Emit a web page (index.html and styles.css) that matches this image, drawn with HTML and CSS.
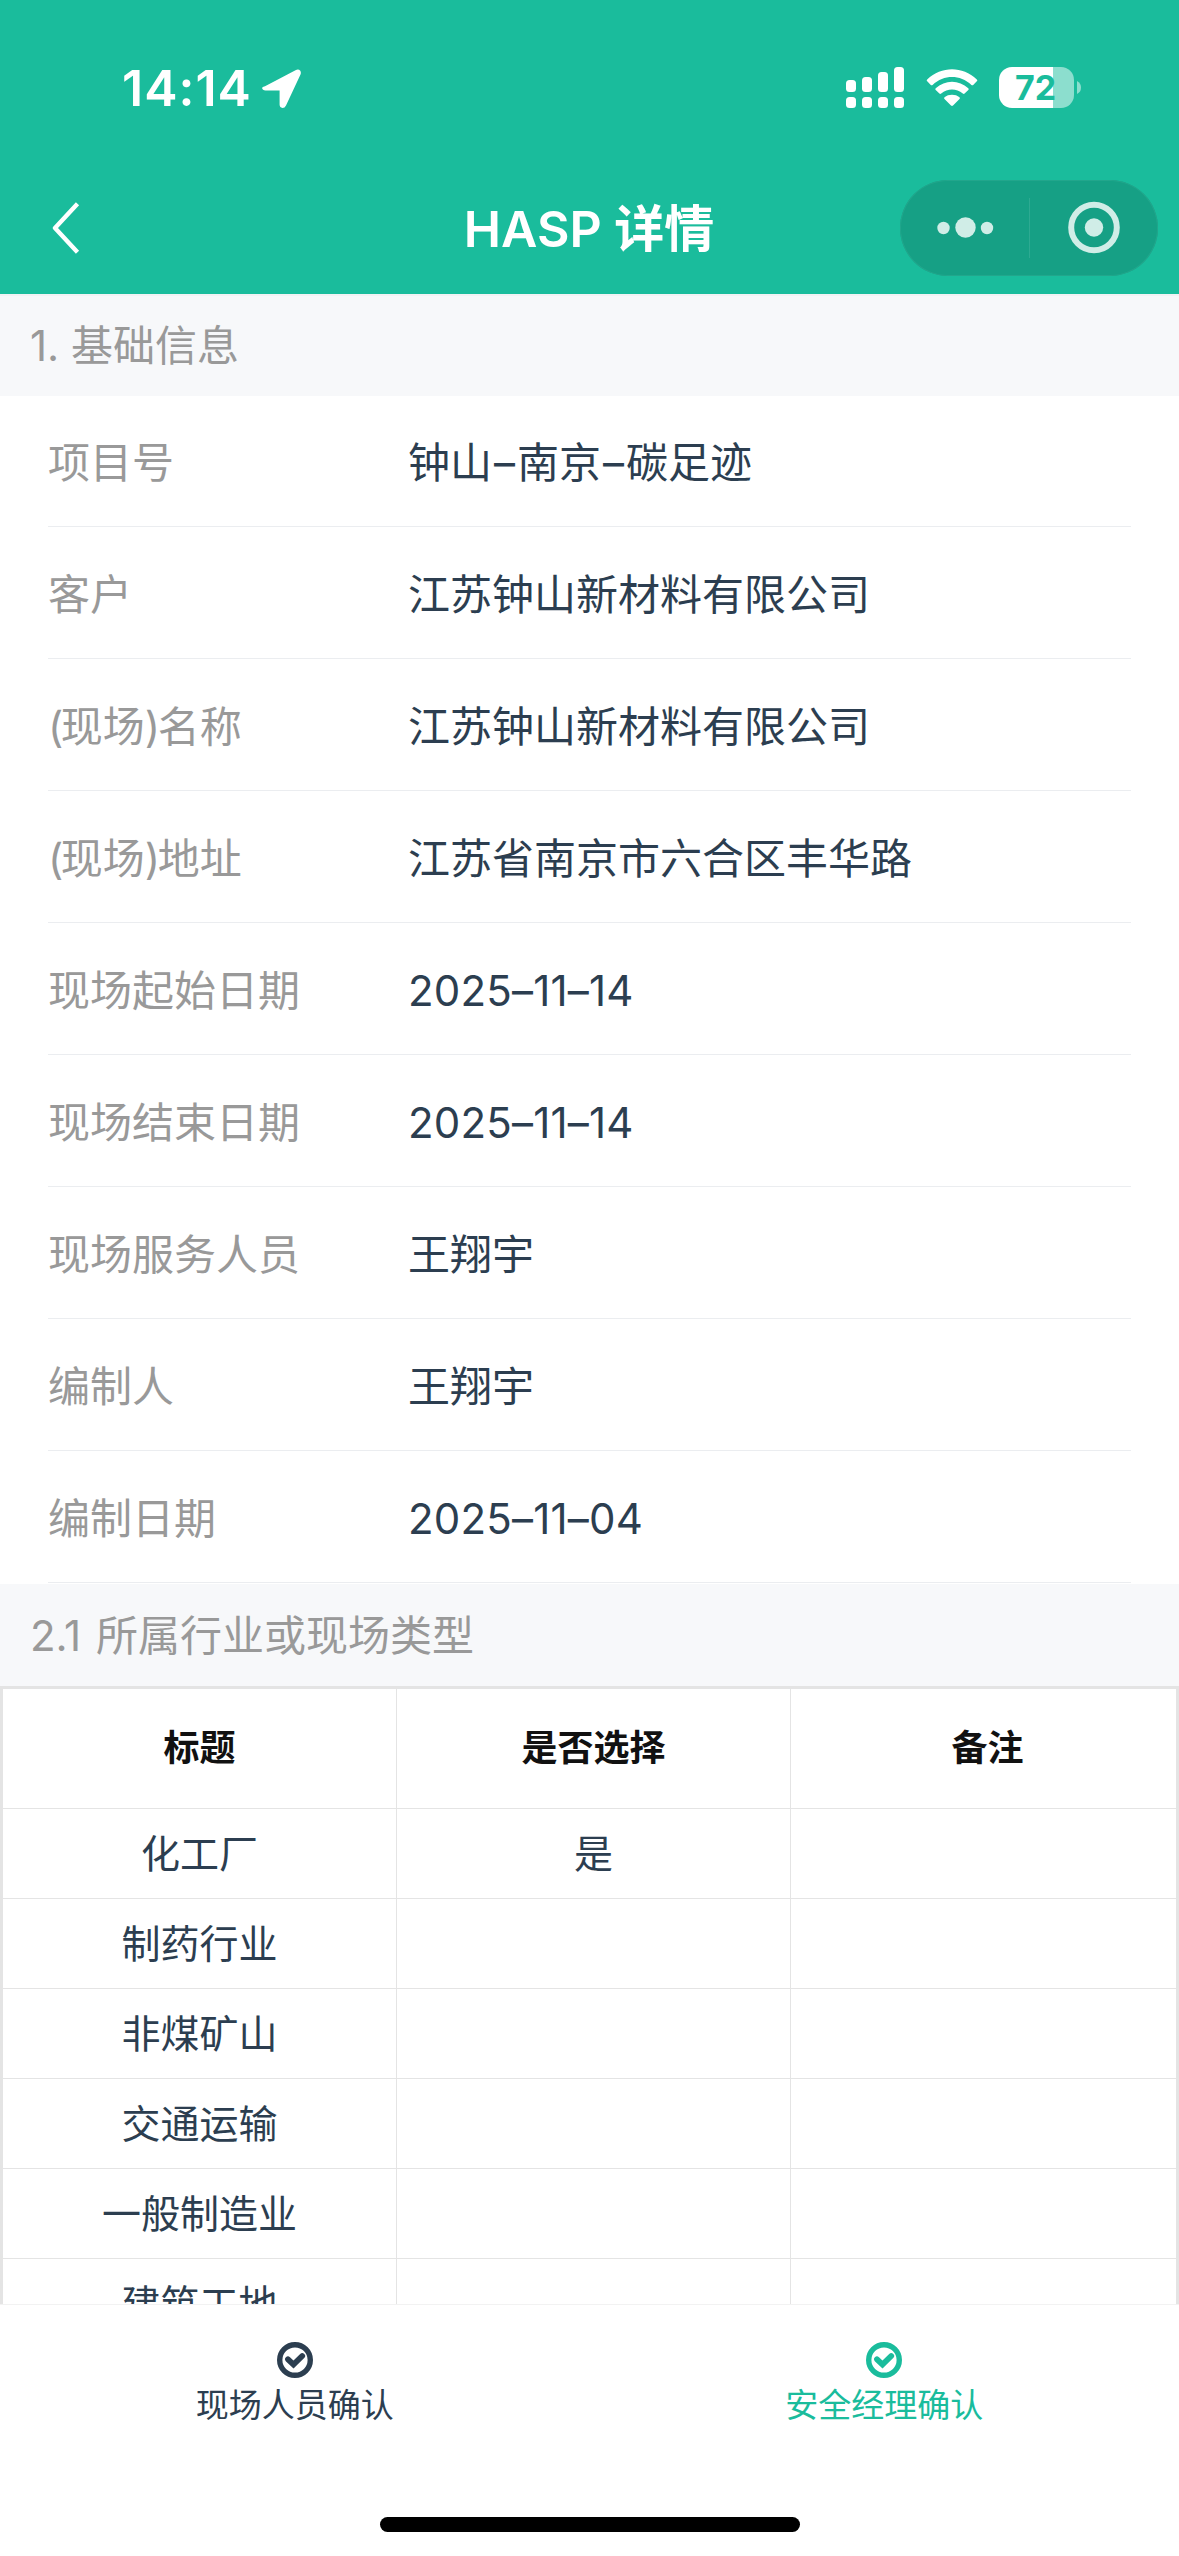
FILE: index.html
```html
<!DOCTYPE html>
<html lang="zh-CN">
<head>
<meta charset="utf-8">
<title>HASP 详情</title>
<link rel="stylesheet" href="styles.css">
</head>
<body>
<header class="header">
  <div class="status">
    <div class="status-left">
      <span class="time">14:14</span>
      <svg class="location" width="39" height="39" viewBox="0 0 39 39"><path d="M3 17.200 33.500 1.200Q36.500-.3 38.300 1.800 39.300 3.500 38.500 5.600L24 36.500Q22.800 39 20.500 39 17.600 38.500 17.600 35.500V21.500H3.500Q.4 21.300.1 19 0 18 3 17.200Z" fill="#fff"/></svg>
    </div>
    <div class="status-right">
      <svg width="58" height="41" viewBox="0 0 58 41" fill="#fff">
        <rect x="0" y="13" width="10" height="12" rx="3.500"/><rect x="16" y="10" width="10" height="15" rx="3.500"/><rect x="32" y="5" width="10" height="20" rx="3.500"/><rect x="48" y="0" width="10" height="25" rx="3.500"/>
        <rect x="0" y="30" width="10" height="11" rx="3.500"/><rect x="16" y="30" width="10" height="11" rx="3.500"/><rect x="32" y="30" width="10" height="11" rx="3.500"/><rect x="48" y="30" width="10" height="11" rx="3.500"/>
      </svg>
      <svg class="wifi" width="52" height="38" viewBox="0 0 52 38" fill="#fff">
        <path d="M1.200 10.400Q.2 11.300 1.200 12.300L4.800 15.900Q5.600 16.700 6.600 15.900C18 5.500 34 5.500 45.400 15.900Q46.400 16.700 47.200 15.900L50.800 12.300Q51.800 11.300 50.800 10.400C36.500-3.200 15.500-3.200 1.200 10.400Z"/>
        <path d="M9.700 19.200Q8.800 20.100 9.700 21L13.400 24.600Q14.200 25.400 15.200 24.600C21.500 19 30.500 19 36.800 24.600Q37.800 25.400 38.600 24.600L42.300 21Q43.200 20.100 42.300 19.200C33 10.500 19 10.500 9.700 19.200Z"/>
        <path d="M18.500 28.200Q17.600 29.100 18.500 30L25 36.600Q26 37.500 27 36.600L33.500 30Q34.400 29.100 33.500 28.200C29.500 24.900 22.500 24.900 18.500 28.200Z"/>
      </svg>
      <div class="battery"><span>72</span></div>
      <svg class="battery-cap" width="4" height="13" viewBox="0 0 4 13"><path d="M0 0Q4 2 4 6.500T0 13Z" fill="#8cdece"/></svg>
    </div>
  </div>
  <nav class="navbar">
    <svg class="back" width="28" height="52" viewBox="0 0 28 52"><path d="M25.500 1.800 3 26 25.500 50.200" fill="none" stroke="#fff" stroke-width="4.400" stroke-linejoin="round"/></svg>
    <h1>HASP 详情</h1>
    <div class="capsule">
      <svg width="258" height="96" viewBox="0 0 258 96" fill="#d0ede7">
        <circle cx="43.500" cy="48" r="6.200"/><circle cx="65.500" cy="47.500" r="10.200"/><circle cx="87" cy="48" r="6.200"/>
        <rect x="129" y="18" width="1" height="60" fill="#2daa92"/>
        <circle cx="194" cy="47.500" r="22.800" fill="none" stroke="#d0ede7" stroke-width="6"/><circle cx="194" cy="47.500" r="9.200"/>
      </svg>
    </div>
  </nav>
</header>
<main class="content">
  <h2 class="section first">1. 基础信息</h2>
  <dl class="info">
    <div class="row"><dt>项目号</dt><dd>钟山<span class="dash">–</span>南京<span class="dash">–</span>碳足迹</dd></div>
    <div class="row"><dt>客户</dt><dd>江苏钟山新材料有限公司</dd></div>
    <div class="row"><dt><span class="paren">(</span>现场<span class="paren">)</span>名称</dt><dd>江苏钟山新材料有限公司</dd></div>
    <div class="row"><dt><span class="paren">(</span>现场<span class="paren">)</span>地址</dt><dd>江苏省南京市六合区丰华路</dd></div>
    <div class="row"><dt>现场起始日期</dt><dd class="date">2025–11–14</dd></div>
    <div class="row"><dt>现场结束日期</dt><dd class="date">2025–11–14</dd></div>
    <div class="row"><dt>现场服务人员</dt><dd>王翔宇</dd></div>
    <div class="row"><dt>编制人</dt><dd>王翔宇</dd></div>
    <div class="row"><dt>编制日期</dt><dd class="date">2025–11–04</dd></div>
  </dl>
  <h2 class="section second">2.1 所属行业或现场类型</h2>
  <div class="table">
    <div class="tr th"><div>标题</div><div>是否选择</div><div>备注</div></div>
    <div class="tr"><div>化工厂</div><div>是</div><div></div></div>
    <div class="tr"><div>制药行业</div><div></div><div></div></div>
    <div class="tr"><div>非煤矿山</div><div></div><div></div></div>
    <div class="tr"><div>交通运输</div><div></div><div></div></div>
    <div class="tr"><div>一般制造业</div><div></div><div></div></div>
    <div class="tr"><div>建筑工地</div><div></div><div></div></div>
  </div>
</main>
<footer class="footer">
  <div class="actions">
    <div class="action">
      <svg width="36" height="36" viewBox="0 0 36 36"><circle cx="18" cy="18" r="15.300" fill="none" stroke="currentColor" stroke-width="5.400"/><path d="M11 17.300 16.500 22.500 25.200 14" fill="none" stroke="currentColor" stroke-width="5.800" stroke-linejoin="miter" stroke-linecap="round"/></svg>
      <span>现场人员确认</span>
    </div>
    <div class="action active">
      <svg width="36" height="36" viewBox="0 0 36 36"><circle cx="18" cy="18" r="15.300" fill="none" stroke="currentColor" stroke-width="5.400"/><path d="M11 17.300 16.500 22.500 25.200 14" fill="none" stroke="currentColor" stroke-width="5.800" stroke-linejoin="miter" stroke-linecap="round"/></svg>
      <span>安全经理确认</span>
    </div>
  </div>
  <div class="home"></div>
</footer>
</body>
</html>
```
FILE: styles.css
```css
* { box-sizing: border-box; margin: 0; padding: 0; }
body {
  width: 1179px;
  height: 2556px;
  display: flex;
  flex-direction: column;
  overflow: hidden;
  background: #fff;
  color: #2c3e50;
  font-family: Inter, "Noto Sans CJK SC", sans-serif;
  font-size: 42px;
}
svg { display: block; flex: none; }

.header { height: 294px; flex: none; background: #1abc9c; color: #fff; }
.status {
  height: 180px;
  padding: 67px 98px 0 122px;
  display: flex;
  justify-content: space-between;
  align-items: flex-start;
}
.status-left, .status-right { display: flex; align-items: flex-start; }
.time { width: 140px; font-size: 50px; font-weight: 600; line-height: 42px; letter-spacing: 1px; }
.location { margin-top: 2px; }
.wifi { margin: 2px 21px 0 22px; }
.battery {
  width: 75px;
  height: 41px;
  padding-right: 2px;
  border-radius: 13px;
  background: linear-gradient(90deg, #fff 54px, #8cdece 54px);
  color: #1abc9c;
  font-size: 34px;
  font-weight: 700;
  line-height: 41px;
  text-align: center;
}
.battery-cap { margin: 14px 0 0 3px; }

.navbar {
  height: 96px;
  padding: 0 21px 0 52px;
  display: grid;
  grid-template-columns: 258px 1fr 258px;
  align-items: center;
}
.navbar h1 { font-size: 50px; font-weight: 600; line-height: 72px; text-align: center; padding: 2px 32px 0 0; white-space: nowrap; }
.capsule {
  height: 96px;
  border-radius: 48px;
  background: #16a085;
  box-shadow: inset 0 0 0 1px #22a68c;
}

.content { flex: 1; min-height: 0; overflow: hidden; }
.section {
  height: 102px;
  padding: 1px 0 0 30px;
  background: #f7f8fa;
  color: #999;
  font-size: 42px;
  font-weight: 400;
  line-height: 102px;
}
.section.first { box-shadow: inset 0 2px #f1f2f4; }
.section.second { word-spacing: 3px; }
.info { padding: 0 48px; }
.row {
  height: 131px;
  margin-bottom: 1px;
  padding-top: 3px;
  display: flex;
  align-items: center;
  border-bottom: 1px solid #ebedf0;
  line-height: 60px;
}
.row:last-child { margin-bottom: 0; }
.info { padding-bottom: 1px; }
.row dt { width: 360px; flex: none; color: #999; }
.row dd { white-space: nowrap; }
.row .dash { letter-spacing: 2px; margin-left: 2px; }
.row .date { letter-spacing: 0.2px; }
.row .paren { letter-spacing: -2.5px; }

.table { border: 3px solid #e4e4e4; border-bottom: 0; overflow: hidden; }
.tr { display: grid; grid-template-columns: repeat(3, 394px); height: 90px; font-size: 39px; line-height: 56px; }
.tr > div {
  display: flex;
  align-items: center;
  justify-content: center;
  border-right: 1px solid #e4e4e4;
  border-bottom: 1px solid #e4e4e4;
}
.tr.th { height: 120px; color: #111; font-size: 36px; font-weight: 700; }
.tr.th > div { padding-bottom: 2px; }

.footer {
  height: 252px;
  flex: none;
  display: flex;
  flex-direction: column;
  justify-content: space-between;
  align-items: center;
  padding-bottom: 24px;
  border-top: 1px solid #f2f2f2;
}
.actions { width: 100%; display: grid; grid-template-columns: 1fr 1fr; padding-top: 37px; }
.action { display: flex; flex-direction: column; align-items: center; gap: 2px; font-size: 33px; line-height: 50px; }
.action.active { color: #1abc9c; }
.home { width: 420px; height: 15px; border-radius: 8px; background: #000; }
```
